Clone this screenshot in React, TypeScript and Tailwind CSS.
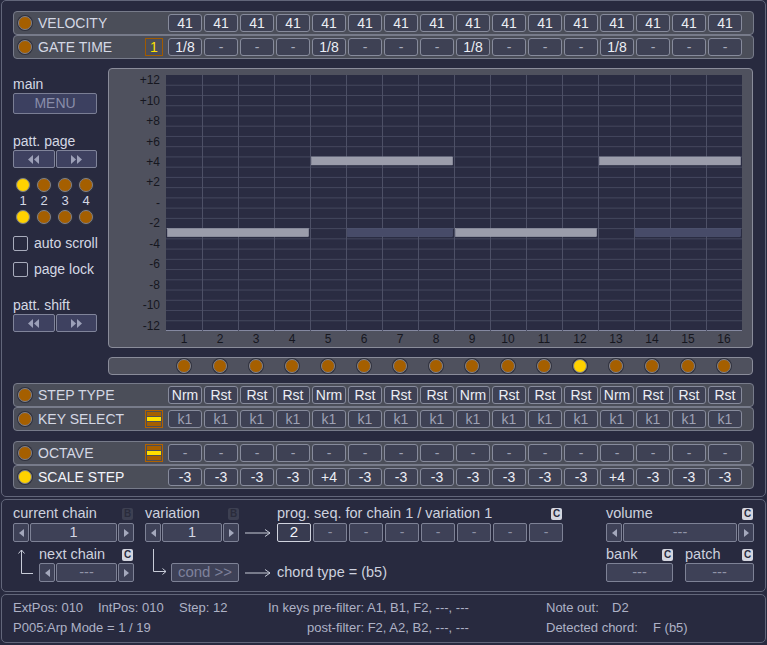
const velocity = Array(16).fill('41');
const gate = ['1/8', '-', '-', '-', '1/8', '-', '-', '-', '1/8', '-', '-', '-', '1/8', '-', '-', '-'];
const stepType = ['Nrm', 'Rst', 'Rst', 'Rst', 'Nrm', 'Rst', 'Rst', 'Rst', 'Nrm', 'Rst', 'Rst', 'Rst', 'Nrm', 'Rst', 'Rst', 'Rst'];
const keys = Array(16).fill('k1');
const octave = Array(16).fill('-');
const scale = ['-3', '-3', '-3', '-3', '+4', '-3', '-3', '-3', '-3', '-3', '-3', '-3', '+4', '-3', '-3', '-3'];

const notes = [
  { start: 0, len: 4, row: 15, ghost: false },
  { start: 4, len: 4, row: 8, ghost: false },
  { start: 5, len: 3, row: 15, ghost: true },
  { start: 8, len: 4, row: 15, ghost: false },
  { start: 12, len: 4, row: 8, ghost: false },
  { start: 13, len: 3, row: 15, ghost: true },
];

const yLabels = ['+12', '+10', '+8', '+6', '+4', '+2', '-', '-2', '-4', '-6', '-8', '-10', '-12'];
const ROW_H = 10.24;

function Led({ on = false }: { on?: boolean }) {
  return (
    <span
      className={`block w-[14px] h-[14px] shrink-0 rounded-full border border-[#7d808e] shadow-[0_0_0_1px_#30323e] ${
        on ? 'bg-[#ffd200]' : 'bg-[#a55f00]'
      }`}
    />
  );
}

function Tri({ dir }: { dir: 'l' | 'r' }) {
  return (
    <svg width="5" height="8" viewBox="0 0 5 8" className="text-[#a4a8bc]">
      {dir === 'l' ? (
        <polygon points="5,0 0,4 5,8" fill="currentColor" />
      ) : (
        <polygon points="0,0 5,4 0,8" fill="currentColor" />
      )}
    </svg>
  );
}

function DoubleTri({ dir }: { dir: 'l' | 'r' }) {
  return (
    <svg width="13" height="9" viewBox="0 0 13 9" className="text-[#9ca0b8]">
      {dir === 'l' ? (
        <>
          <polygon points="6,0 1,4.5 6,9" fill="currentColor" />
          <polygon points="12,0 7,4.5 12,9" fill="currentColor" />
        </>
      ) : (
        <>
          <polygon points="1,0 6,4.5 1,9" fill="currentColor" />
          <polygon points="7,0 12,4.5 7,9" fill="currentColor" />
        </>
      )}
    </svg>
  );
}

function LongArrow() {
  return (
    <svg width="26" height="10" viewBox="0 0 26 10" className="text-[#c8ccd8]">
      <line x1="0" y1="5" x2="25" y2="5" stroke="currentColor" strokeWidth="1" />
      <polyline points="20,1.5 25,5 20,8.5" fill="none" stroke="currentColor" strokeWidth="1" />
    </svg>
  );
}

function KeyIcon() {
  return (
    <div className="w-[18px] h-[18px] shrink-0 border border-[#b06200] p-[1px] flex flex-col gap-[1px]">
      <div className="h-[4px] bg-[#a55f00]" />
      <div className="h-[4px] bg-[#ffe000]" />
      <div className="h-[4px] bg-[#a55f00]" />
    </div>
  );
}

function Badge({ letter, dim = false }: { letter: string; dim?: boolean }) {
  return (
    <span
      className={`w-[11px] h-[12px] rounded-[2px] flex items-center justify-center text-[10px] font-bold leading-none ${
        dim ? 'bg-[#3d4052] text-[#2a2c3c]' : 'bg-[#d4d6e0] text-[#2a2c40]'
      }`}
    >
      {letter}
    </span>
  );
}

type RowProps = {
  label: string;
  values: string[];
  on?: boolean;
  icon?: 'gate' | 'key' | null;
  tone?: 'bright' | 'dim' | 'gate';
};

function ParamRow({ label, values, on = false, icon = null, tone = 'bright' }: RowProps) {
  return (
    <div className="h-[24px] w-[741px] flex items-center pl-[4px] bg-[#4b4e59] border border-[#777b8a] rounded-[4px]">
      <Led on={on} />
      <span className={`ml-[6px] w-[107px] text-[14px] ${on ? 'text-[#f2f4fa]' : 'text-[#d4d8e4]'}`}>{label}</span>
      {icon === 'key' && <KeyIcon />}
      {icon === 'gate' && (
        <div className="w-[18px] h-[18px] shrink-0 border border-[#a05a00] flex items-center justify-center text-[14px] text-[#ffe000]">
          1
        </div>
      )}
      {icon === null && <div className="w-[18px] shrink-0" />}
      <div className="ml-[5px] grid grid-cols-[repeat(16,34px)] gap-x-[2px]">
        {values.map((v, i) => (
          <div
            key={i}
            className={`h-[18px] flex items-center justify-center rounded-[3px] border border-[#878b9c] bg-[#3e4154] text-[14px] ${
              tone === 'dim'
                ? 'text-[#9ea2b4]'
                : tone === 'gate' && v === '-'
                ? 'text-[#a8acbc]'
                : 'text-[#eceef4]'
            }`}
          >
            {v}
          </div>
        ))}
      </div>
    </div>
  );
}

function Spinner({ value, dim = false }: { value: string; dim?: boolean }) {
  return (
    <div className="h-[19px] flex gap-[1px]">
      <div className="w-[16px] shrink-0 flex items-center justify-center bg-[#3e4157] border border-[#7e8296] rounded-[2px]">
        <Tri dir="l" />
      </div>
      <div
        className={`flex-1 flex items-center justify-center bg-[#3e4157] border border-[#7e8296] rounded-[2px] text-[14.5px] ${
          dim ? 'text-[#9094a8]' : 'text-[#d4d8e4]'
        }`}
      >
        {value}
      </div>
      <div className="w-[16px] shrink-0 flex items-center justify-center bg-[#3e4157] border border-[#7e8296] rounded-[2px]">
        <Tri dir="r" />
      </div>
    </div>
  );
}

function PattButtons() {
  return (
    <div className="flex gap-[1px] w-[84px] h-[18px]">
      <div className="flex-1 flex items-center justify-center bg-[#3e4160] border border-[#80849a] rounded-[2px]">
        <DoubleTri dir="l" />
      </div>
      <div className="flex-1 flex items-center justify-center bg-[#3e4160] border border-[#80849a] rounded-[2px]">
        <DoubleTri dir="r" />
      </div>
    </div>
  );
}

function Chart() {
  return (
    <div className="w-[645px] h-[280px] flex bg-[#4f515e] border border-[#8a8c9a] rounded-[4px]">
      <div className="w-[57px] pt-[6px] pr-[6px] flex flex-col">
        {Array.from({ length: 25 }).map((_, i) => (
          <div key={i} className="h-[10.24px] flex items-center justify-end text-[12px] leading-none text-[#16171f]">
            {i % 2 === 0 ? yLabels[i / 2] : ''}
          </div>
        ))}
      </div>
      <div className="flex flex-col pt-[6px]">
        <div className="w-[576px] h-[256px] bg-[#2a2c42] border-b border-[#8488a0]">
          <svg width="576" height="256" viewBox="0 0 576 256" className="block">
            {Array.from({ length: 24 }).map((_, i) => (
              <line key={`h${i}`} x1="0" x2="576" y1={(i + 1) * ROW_H} y2={(i + 1) * ROW_H} stroke="#45485e" strokeWidth="1" />
            ))}
            {Array.from({ length: 15 }).map((_, i) => (
              <line key={`v${i}`} x1={(i + 1) * 36 + 0.5} x2={(i + 1) * 36 + 0.5} y1="0" y2="256" stroke="#4d5066" strokeWidth="1" />
            ))}
            {notes.map((n, i) => (
              <rect
                key={i}
                x={n.start * 36 + 1.5}
                y={n.row * ROW_H}
                width={n.len * 36 - 3}
                height={8}
                fill={n.ghost ? '#474b68' : '#9b9dab'}
                stroke={n.ghost ? '#555a78' : '#a8aab8'}
                strokeWidth="0.5"
              />
            ))}
          </svg>
        </div>
        <div className="flex h-[16px] items-center">
          {Array.from({ length: 16 }).map((_, i) => (
            <div key={i} className="w-[36px] text-center text-[12px] text-[#16171f]">
              {i + 1}
            </div>
          ))}
        </div>
      </div>
    </div>
  );
}

export default function App() {
  return (
    <div className="w-[767px] h-[645px] bg-[#282a3f] font-['Liberation_Sans',Arial,sans-serif] overflow-hidden">
      {/* top panel */}
      <div className="ml-[1px] w-[765px] h-[497px] border border-[#62667a] rounded-[5px] pl-[11px] pt-[10px]">
        <ParamRow label="VELOCITY" values={velocity} />
        <ParamRow label="GATE TIME" values={gate} icon="gate" tone="gate" />

        <div className="mt-[9px] flex">
          {/* left column */}
          <div className="w-[95px] flex flex-col text-[14px] text-[#d4d8e4]">
            <div className="mt-[8px] h-[16px] leading-[16px]">main</div>
            <div className="mt-[1px] w-[84px] h-[21px] flex items-center justify-center bg-[#3c4060] border border-[#7a7e94] rounded-[2px] text-[#8a8eaa]">
              MENU
            </div>
            <div className="mt-[19px] h-[16px] leading-[16px]">patt. page</div>
            <div className="mt-[1px]">
              <PattButtons />
            </div>
            <div className="mt-[10px] pl-[3px] flex gap-[7px]">
              <Led on />
              <Led />
              <Led />
              <Led />
            </div>
            <div className="mt-[2px] pl-[3px] flex gap-[7px] text-[13px] leading-[14px]">
              {[1, 2, 3, 4].map((n) => (
                <span key={n} className="w-[14px] text-center">
                  {n}
                </span>
              ))}
            </div>
            <div className="mt-[2px] pl-[3px] flex gap-[7px]">
              <Led on />
              <Led />
              <Led />
              <Led />
            </div>
            <div className="mt-[12px] flex items-center gap-[6px] h-[15px]">
              <span className="w-[15px] h-[15px] border border-[#a8acbc] rounded-[2px]" />
              <span>auto scroll</span>
            </div>
            <div className="mt-[11px] flex items-center gap-[6px] h-[15px]">
              <span className="w-[15px] h-[15px] border border-[#a8acbc] rounded-[2px]" />
              <span>page lock</span>
            </div>
            <div className="mt-[20px] h-[16px] leading-[16px]">patt. shift</div>
            <div className="mt-[1px]">
              <PattButtons />
            </div>
          </div>

          {/* chart column */}
          <div className="flex flex-col">
            <Chart />
            <div className="mt-[9px] w-[645px] h-[18px] flex items-center pl-[68px] gap-[22px] bg-[#4f515e] border border-[#8a8c9a] rounded-[4px]">
              {Array.from({ length: 16 }).map((_, i) => (
                <Led key={i} on={i === 11} />
              ))}
            </div>
          </div>
        </div>

        <div className="mt-[8px]">
          <ParamRow label="STEP TYPE" values={stepType} />
          <ParamRow label="KEY SELECT" values={keys} icon="key" tone="dim" />
        </div>
        <div className="mt-[10px]">
          <ParamRow label="OCTAVE" values={octave} icon="key" tone="dim" />
          <ParamRow label="SCALE STEP" values={scale} on />
        </div>
      </div>

      {/* chain panel */}
      <div className="mt-[2px] ml-[1px] w-[765px] h-[93px] border border-[#62667a] rounded-[5px] pl-[11px] pt-[6px] flex text-[14.5px] text-[#cdd1de]">
        {/* current chain */}
        <div className="w-[121px] flex flex-col">
          <div className="h-[16px] flex items-center justify-between pr-[1px]">
            <span>current chain</span>
            <Badge letter="B" dim />
          </div>
          <div className="mt-[1px]">
            <Spinner value="1" />
          </div>
          <div className="mt-[5px] flex">
            <svg width="26" height="35" viewBox="0 0 26 35" className="text-[#c8ccd8] shrink-0">
              <polyline points="8.5,3 8.5,26.5 20,26.5" fill="none" stroke="currentColor" strokeWidth="1" />
              <polyline points="5.5,6.5 8.5,3 11.5,6.5" fill="none" stroke="currentColor" strokeWidth="1" />
            </svg>
            <div className="w-[95px] flex flex-col">
              <div className="h-[16px] flex items-center justify-between pr-[1px]">
                <span>next chain</span>
                <Badge letter="C" />
              </div>
              <Spinner value="---" dim />
            </div>
          </div>
        </div>

        {/* variation */}
        <div className="ml-[11px] w-[94px] flex flex-col">
          <div className="h-[16px] flex items-center justify-between">
            <span>variation</span>
            <Badge letter="B" dim />
          </div>
          <div className="mt-[1px]">
            <Spinner value="1" />
          </div>
          <div className="mt-[5px] flex">
            <svg width="26" height="35" viewBox="0 0 26 35" className="text-[#c8ccd8] shrink-0">
              <polyline points="8.5,2 8.5,24.5 21,24.5" fill="none" stroke="currentColor" strokeWidth="1" />
              <polyline points="17.5,21.5 21,24.5 17.5,27.5" fill="none" stroke="currentColor" strokeWidth="1" />
            </svg>
            <div className="w-[68px] mt-[16px] h-[19px] flex items-center justify-center bg-[#3e4157] border border-[#7e8296] rounded-[2px] text-[15px] text-[#7e829c]">
              cond &gt;&gt;
            </div>
          </div>
        </div>

        {/* arrows */}
        <div className="w-[38px] flex flex-col pl-[6px]">
          <div className="mt-[17px] h-[19px] flex items-center">
            <LongArrow />
          </div>
          <div className="mt-[21px] h-[19px] flex items-center">
            <LongArrow />
          </div>
        </div>

        {/* prog seq */}
        <div className="w-[286px] flex flex-col">
          <div className="h-[16px] flex items-center justify-between pr-[1px]">
            <span>prog. seq. for chain 1 / variation 1</span>
            <Badge letter="C" />
          </div>
          <div className="mt-[1px] flex gap-[2px]">
            {['2', '-', '-', '-', '-', '-', '-', '-'].map((v, i) => (
              <div
                key={i}
                className={`w-[34px] h-[19px] flex items-center justify-center rounded-[2px] border ${
                  i === 0
                    ? 'border-[#d0d3de] bg-[#383b50] text-[#f2f4fa] text-[15px]'
                    : 'border-[#7e8296] bg-[#3e4157] text-[#8c90a4] text-[14px]'
                }`}
              >
                {v}
              </div>
            ))}
          </div>
          <div className="mt-[21px] h-[19px] flex items-center">chord type = (b5)</div>
        </div>

        {/* volume / bank / patch */}
        <div className="ml-[43px] w-[148px] flex flex-col">
          <div className="h-[16px] flex items-center justify-between pr-[1px]">
            <span>volume</span>
            <Badge letter="C" />
          </div>
          <div className="mt-[1px]">
            <Spinner value="---" dim />
          </div>
          <div className="mt-[5px] flex gap-[12px]">
            <div className="w-[67px] flex flex-col">
              <div className="h-[16px] flex items-center justify-between">
                <span>bank</span>
                <Badge letter="C" />
              </div>
              <div className="h-[19px] flex items-center justify-center bg-[#3e4157] border border-[#7e8296] rounded-[2px] text-[#9094a8]">
                ---
              </div>
            </div>
            <div className="w-[69px] flex flex-col">
              <div className="h-[16px] flex items-center justify-between pr-[1px]">
                <span>patch</span>
                <Badge letter="C" />
              </div>
              <div className="h-[19px] flex items-center justify-center bg-[#3e4157] border border-[#7e8296] rounded-[2px] text-[#9094a8]">
                ---
              </div>
            </div>
          </div>
        </div>
      </div>

      {/* status panel */}
      <div className="mt-[2px] ml-[1px] w-[765px] h-[49px] border border-[#62667a] rounded-[5px] pl-[11px] pt-[3px] text-[13px] text-[#aeb2c6]">
        <div className="h-[20px] flex items-center whitespace-pre">
          <span className="w-[85px]">ExtPos: 010</span>
          <span className="w-[81px]">IntPos: 010</span>
          <span className="w-[89px]">Step: 12</span>
          <span className="w-[278px]">In keys pre-filter: A1, B1, F2, ---, ---</span>
          <span className="w-[66px]">Note out:</span>
          <span>D2</span>
        </div>
        <div className="h-[20px] flex items-center whitespace-pre">
          <span className="w-[294px]">P005:Arp Mode = 1 / 19</span>
          <span className="w-[239px]">post-filter: F2, A2, B2, ---, ---</span>
          <span className="w-[107px]">Detected chord:</span>
          <span>F (b5)</span>
        </div>
      </div>
    </div>
  );
}
